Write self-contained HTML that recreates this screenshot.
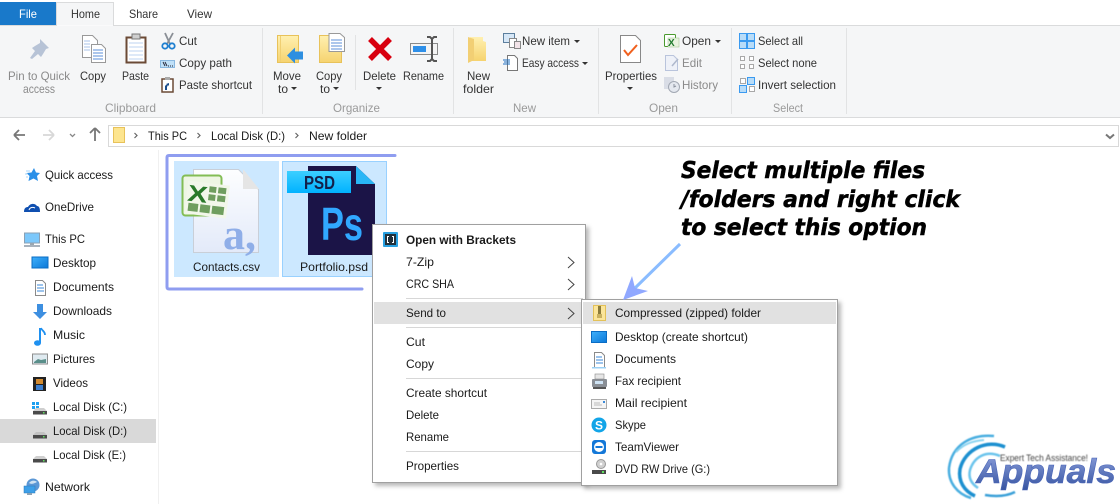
<!DOCTYPE html>
<html><head><meta charset="utf-8"><style>
html,body{margin:0;padding:0;background:#fff;overflow:hidden}
svg{display:block}
text{font-family:"Liberation Sans",sans-serif;font-size:12px;fill:#1a1a1a;white-space:pre}
.g{fill:#8a8a8a}.r{fill:#333}.l{fill:#9a9a9a}
.a{font-family:"DejaVu Sans",sans-serif;font-weight:bold;font-style:italic;font-size:23px;fill:#000;stroke:#000;stroke-width:.5}
</style></head><body>
<svg width="1120" height="504" viewBox="0 0 1120 504" xmlns="http://www.w3.org/2000/svg">
<defs>
<linearGradient id="fold" x1="0" y1="0" x2="0" y2="1"><stop offset="0" stop-color="#fff0b0"/><stop offset="1" stop-color="#f6d36f"/></linearGradient>
<linearGradient id="blue" x1="0" y1="0" x2="1" y2="1"><stop offset="0" stop-color="#3fb0fb"/><stop offset="1" stop-color="#0a78d8"/></linearGradient>
<linearGradient id="psd" x1="0" y1="0" x2="0" y2="1"><stop offset="0" stop-color="#3ccfff"/><stop offset="1" stop-color="#00b2ff"/></linearGradient>
<linearGradient id="page" x1="0" y1="0" x2="0" y2="1"><stop offset="0" stop-color="#fdfeff"/><stop offset="1" stop-color="#e3eaf9"/></linearGradient>
<linearGradient id="app" x1="0" y1="0" x2="0" y2="1"><stop offset="0" stop-color="#8c9fdc"/><stop offset="1" stop-color="#34529f"/></linearGradient>
<filter id="sh" x="-5%" y="-5%" width="112%" height="112%"><feDropShadow dx="3" dy="3" stdDeviation="2" flood-color="#000" flood-opacity=".28"/></filter>
<filter id="bl"><feGaussianBlur stdDeviation=".5"/></filter>
</defs>
<rect width="1120" height="504" fill="#fff"/>

<!-- tabs -->
<rect x="0" y="2" width="56" height="24" fill="#1979ca"/>
<path d="M56.500 25.500V2.500H113.500V25.500" fill="#f5f6f7" stroke="#dadbdc"/>
<rect x="0" y="26" width="1120" height="91" fill="#f5f6f7"/>
<rect x="0" y="25" width="57" height="1" fill="#dadbdc"/><rect x="113" y="25" width="1007" height="1" fill="#dadbdc"/>
<rect x="0" y="117" width="1120" height="1" fill="#dadbdc"/>
<text x="19" y="18" textLength="18" lengthAdjust="spacingAndGlyphs" style="fill:#fff">File</text>
<text x="71" y="18" textLength="29" lengthAdjust="spacingAndGlyphs" class="r">Home</text>
<text x="129" y="18" textLength="29" lengthAdjust="spacingAndGlyphs" class="r">Share</text>
<text x="187" y="18" textLength="25" lengthAdjust="spacingAndGlyphs" class="r">View</text>

<!-- ribbon seps -->
<g fill="#e2e3e4"><rect x="262" y="28" width="1" height="86"/><rect x="355" y="35" width="1" height="55"/><rect x="453" y="28" width="1" height="86"/><rect x="598" y="28" width="1" height="86"/><rect x="731" y="28" width="1" height="86"/><rect x="846" y="28" width="1" height="86"/></g>

<!-- ribbon labels -->
<text x="8" y="80" textLength="62" lengthAdjust="spacingAndGlyphs" class="g">Pin to Quick</text>
<text x="23" y="93" textLength="32" lengthAdjust="spacingAndGlyphs" class="g">access</text>
<text x="80" y="80" textLength="26" lengthAdjust="spacingAndGlyphs" class="r">Copy</text>
<text x="122" y="80" textLength="27" lengthAdjust="spacingAndGlyphs" class="r">Paste</text>
<text x="179" y="45" textLength="18" lengthAdjust="spacingAndGlyphs" class="r">Cut</text>
<text x="179" y="67" textLength="53" lengthAdjust="spacingAndGlyphs" class="r">Copy path</text>
<text x="179" y="89" textLength="73" lengthAdjust="spacingAndGlyphs" class="r">Paste shortcut</text>
<text x="105" y="112" textLength="51" lengthAdjust="spacingAndGlyphs" class="l">Clipboard</text>
<text x="273" y="80" textLength="28" lengthAdjust="spacingAndGlyphs" class="r">Move</text>
<text x="278" y="93" textLength="10" lengthAdjust="spacingAndGlyphs" class="r">to</text>
<text x="316" y="80" textLength="26" lengthAdjust="spacingAndGlyphs" class="r">Copy</text>
<text x="320" y="93" textLength="10" lengthAdjust="spacingAndGlyphs" class="r">to</text>
<text x="363" y="80" textLength="33" lengthAdjust="spacingAndGlyphs" class="r">Delete</text>
<text x="403" y="80" textLength="41" lengthAdjust="spacingAndGlyphs" class="r">Rename</text>
<text x="333" y="112" textLength="47" lengthAdjust="spacingAndGlyphs" class="l">Organize</text>
<text x="467" y="80" textLength="23" lengthAdjust="spacingAndGlyphs" class="r">New</text>
<text x="463" y="93" textLength="31" lengthAdjust="spacingAndGlyphs" class="r">folder</text>
<text x="522" y="45" textLength="48" lengthAdjust="spacingAndGlyphs" class="r">New item</text>
<text x="522" y="67" textLength="57" lengthAdjust="spacingAndGlyphs" class="r">Easy access</text>
<text x="513" y="112" textLength="23" lengthAdjust="spacingAndGlyphs" class="l">New</text>
<text x="605" y="80" textLength="52" lengthAdjust="spacingAndGlyphs" class="r">Properties</text>
<text x="682" y="45" textLength="29" lengthAdjust="spacingAndGlyphs" class="r">Open</text>
<text x="682" y="67" textLength="20" lengthAdjust="spacingAndGlyphs" class="g">Edit</text>
<text x="682" y="89" textLength="36" lengthAdjust="spacingAndGlyphs" class="g">History</text>
<text x="649" y="112" textLength="29" lengthAdjust="spacingAndGlyphs" class="l">Open</text>
<text x="758" y="45" textLength="45" lengthAdjust="spacingAndGlyphs" class="r">Select all</text>
<text x="758" y="67" textLength="59" lengthAdjust="spacingAndGlyphs" class="r">Select none</text>
<text x="758" y="89" textLength="78" lengthAdjust="spacingAndGlyphs" class="r">Invert selection</text>
<text x="773" y="112" textLength="30" lengthAdjust="spacingAndGlyphs" class="l">Select</text>
<!-- carets -->
<g fill="#333"><path d="M291 87h6l-3 3z"/><path d="M333 87h6l-3 3z"/><path d="M376 87h6l-3 3z"/><path d="M574 40h6l-3 3z"/><path d="M582 62h6l-3 3z"/><path d="M627 87h6l-3 3z"/><path d="M715 40h6l-3 3z"/></g>

<!-- Pin -->
<path d="M40 39l9 9-3 1-3 5-2 3-3-3-6 5-2-1 5-7-3-3 3-2 5-3z" fill="#b7c3d6"/>
<!-- Copy -->
<path d="M82.500 35.500h10l5 5v17h-15z" fill="#fff" stroke="#999"/>
<path d="M91.500 44.500h10l4 4v14h-14z" fill="#fff" stroke="#999"/>
<g stroke="#a8c3ea"><path d="M84 41h6M84 44h6M84 47h6M84 50h6"/></g>
<g stroke="#5b8fd8"><path d="M93 50h10M93 53h10M93 56h10M93 59h10"/></g>
<!-- Paste -->
<rect x="126.500" y="37.500" width="19" height="25" fill="#fff" stroke="#6b4a36" stroke-width="2"/>
<rect x="132" y="34" width="8" height="5" fill="#cfcfcf" stroke="#777"/>
<g stroke="#bcd3f0"><path d="M129 43h14M129 47h14M129 51h14M129 55h14M129 59h14"/></g>
<!-- Cut -->
<path d="M165 33l5 11M173 33l-6 11" stroke="#8a8f96" stroke-width="1.800" fill="none"/>
<circle cx="165" cy="46" r="2.700" fill="none" stroke="#1e7fd0" stroke-width="1.800"/><circle cx="172" cy="46" r="2.700" fill="none" stroke="#1e7fd0" stroke-width="1.800"/>
<!-- Copy path -->
<rect x="160.500" y="60.500" width="14" height="7" fill="#bfe0f8" stroke="#8ab8e0"/><path d="M163 62l2 4M165 62l2 4M168 66h1M170 66h1M172 66h1" stroke="#223" stroke-width=".9"/>
<!-- Paste shortcut -->
<rect x="162" y="79" width="11" height="13" fill="#fff" stroke="#6b4a36" stroke-width="1.500"/><rect x="165" y="77" width="5" height="3" fill="#aaa"/><path d="M165 90v-4l2-2h-1l3-1v3l-1-1-1 2v3z" fill="#1a4d8c"/>
<!-- Move to -->
<rect x="277.500" y="35.500" width="21" height="27" fill="url(#fold)" stroke="#e8c25a"/>
<rect x="280" y="36" width="1" height="26" fill="#f0cf72"/>
<path d="M287 55.500l8-8v4h8v8h-8v4z" fill="#2e8fe0"/>
<!-- Copy to -->
<rect x="319.500" y="35.500" width="22" height="27" fill="url(#fold)" stroke="#e8c25a"/>
<path d="M329 33.500h11l4.500 4v14H329z" fill="#fff" stroke="#999"/>
<g stroke="#5b8fd8"><path d="M331 40h11M331 43h11M331 46h11M331 49h11"/></g>
<!-- Delete -->
<path d="M370 39l20 20M390 39l-20 20" stroke="#d8000f" stroke-width="5.500"/>
<!-- Rename -->
<rect x="410.500" y="43.500" width="27" height="11" fill="#f4f4f4" stroke="#8a8a8a"/>
<rect x="413" y="46" width="13" height="6" fill="#2e8fe8"/>
<path d="M427 37h3l2 2 2-2h3M432 39v20M427 61h3l2-2 2 2h3" fill="none" stroke="#555" stroke-width="2"/>
<!-- New folder -->
<path d="M470 37h13v4l3 1v19h-18z" fill="url(#fold)"/><path d="M468 37v26l6-3V39z" fill="#f2cf74"/>
<!-- New item -->
<rect x="503.500" y="33.500" width="11" height="9" fill="#d6e7f7" stroke="#5c7f9e"/>
<rect x="509.500" y="38.500" width="7" height="9" fill="#fff" stroke="#888"/>
<rect x="514.500" y="41.500" width="6" height="7" fill="#f3e4e9" stroke="#888"/>
<!-- Easy access -->
<path d="M507.500 55.500h7l3 3v12h-10z" fill="#fff" stroke="#777"/><path d="M503 60h7M504 62h6M503 64h7" stroke="#1e6fc0"/>
<!-- Properties -->
<path d="M620.500 35.500h15l5 5v22h-20z" fill="#fff" stroke="#888"/>
<path d="M624 50l4 5 9-10" fill="none" stroke="#f0601e" stroke-width="2"/>
<!-- Open excel -->
<rect x="664.500" y="34.500" width="11" height="12" rx="1" fill="#fff" stroke="#4a9a2e"/>
<rect x="668" y="38" width="11" height="9" fill="#e8f3df" stroke="#9cbf88" stroke-width=".5"/>
<text x="668" y="46" style="font-size:10px;font-weight:bold;fill:#1f7a2e">X</text>
<!-- Edit -->
<path d="M665.500 55.500h8l4 4v11h-12z" fill="#eef1f8" stroke="#b9c4dc"/><path d="M672 66l6-7" stroke="#aeb8cc" stroke-width="1.500"/>
<!-- History -->
<rect x="664" y="77" width="10" height="12" fill="#d9dde6"/><circle cx="674" cy="87" r="5.500" fill="#e4e8ef" stroke="#a2a8b3"/><path d="M674 84v3l2-1" stroke="#8a919d" fill="none"/>
<!-- Select all -->
<g fill="#b8dcf8" stroke="#3a9af0"><rect x="739.500" y="33.500" width="7" height="7"/><rect x="747.500" y="33.500" width="7" height="7"/><rect x="739.500" y="41.500" width="7" height="7"/><rect x="747.500" y="41.500" width="7" height="7"/></g>
<g fill="#fff" stroke="#a8a8a8"><rect x="740.500" y="56.500" width="4" height="4"/><rect x="749.500" y="56.500" width="4" height="4"/><rect x="740.500" y="64.500" width="4" height="4"/><rect x="749.500" y="64.500" width="4" height="4"/>
<rect x="740.500" y="78.500" width="5" height="5"/><rect x="749.500" y="86.500" width="5" height="5"/></g>
<g fill="#b8dcf8" stroke="#3a9af0"><rect x="747.500" y="77.500" width="7" height="7"/><rect x="739.500" y="85.500" width="7" height="7"/></g>

<!-- address bar -->
<rect x="108.500" y="125.500" width="1010" height="21" fill="#fff" stroke="#d9d9d9"/>
<g fill="none" stroke="#777" stroke-width="1.800"><path d="M14 135l5-5M14 135l5 5M14 135h11"/></g>
<g fill="none" stroke="#d8d8d8" stroke-width="1.800"><path d="M54 135l-5-5M54 135l-5 5M54 135H43"/></g>
<path d="M70 134l2.500 2.500L75 134" fill="none" stroke="#888" stroke-width="1.300"/>
<g fill="none" stroke="#777" stroke-width="1.800"><path d="M95 128v13M95 128l-5 5M95 128l5 5"/></g>
<rect x="113.500" y="127.500" width="11" height="15" fill="#fde58f" stroke="#e8c25a"/>
<path d="M134.500 133l2.500 2.500-2.500 2.500M197.500 133l2.500 2.500-2.500 2.500M295.500 133l2.500 2.500-2.500 2.500" fill="none" stroke="#666" stroke-width="1.200"/>
<path d="M1106 134.500l4 3.500 4-3.500" fill="none" stroke="#777" stroke-width="2"/>
<text x="148" y="140" textLength="39" lengthAdjust="spacingAndGlyphs">This PC</text>
<text x="211" y="140" textLength="74" lengthAdjust="spacingAndGlyphs">Local Disk (D:)</text>
<text x="309" y="140" textLength="58" lengthAdjust="spacingAndGlyphs">New folder</text>

<!-- nav -->
<rect x="158" y="150" width="1" height="354" fill="#f0f0f0"/>
<rect x="0" y="419" width="156" height="24" fill="#d9d9d9"/>
<text x="45" y="179" textLength="68" lengthAdjust="spacingAndGlyphs">Quick access</text>
<text x="45" y="211" textLength="49" lengthAdjust="spacingAndGlyphs">OneDrive</text>
<text x="45" y="243" textLength="40" lengthAdjust="spacingAndGlyphs">This PC</text>
<text x="53" y="267" textLength="43" lengthAdjust="spacingAndGlyphs">Desktop</text>
<text x="53" y="291" textLength="61" lengthAdjust="spacingAndGlyphs">Documents</text>
<text x="53" y="315" textLength="59" lengthAdjust="spacingAndGlyphs">Downloads</text>
<text x="53" y="339" textLength="32" lengthAdjust="spacingAndGlyphs">Music</text>
<text x="53" y="363" textLength="42" lengthAdjust="spacingAndGlyphs">Pictures</text>
<text x="53" y="387" textLength="35" lengthAdjust="spacingAndGlyphs">Videos</text>
<text x="53" y="411" textLength="74" lengthAdjust="spacingAndGlyphs">Local Disk (C:)</text>
<text x="53" y="435" textLength="74" lengthAdjust="spacingAndGlyphs">Local Disk (D:)</text>
<text x="53" y="459" textLength="73" lengthAdjust="spacingAndGlyphs">Local Disk (E:)</text>
<text x="45" y="491" textLength="45" lengthAdjust="spacingAndGlyphs">Network</text>
<!-- nav icons -->
<path d="M34 168l2 4.500 4 .5-3 3 1 5-4.500-2.500-5 2.500 1-5-3-3 5-.5z" fill="#2b90e8"/><path d="M26 171h4M25 174h3M26 177h2" stroke="#a8d4f8"/>
<path d="M24 212c0-4 2-5 4-5 2-4 7-4 9-1 2 0 3 2 3 6z" fill="#0f4fb0"/><path d="M29 210c1-3 4-3 6-2" stroke="#fff" fill="none"/>
<rect x="24.500" y="233" width="15" height="10" fill="#7cc8fb" stroke="#8aa0b4"/><rect x="30" y="243" width="4" height="2" fill="#9aa6b0"/><rect x="24" y="245" width="16" height="2" fill="#a8b2bc"/>
<rect x="32" y="257" width="16" height="11" fill="url(#blue)" stroke="#0a6cc4"/>
<path d="M35.500 280.500h7l3 3v12h-10z" fill="#fff" stroke="#8a8a8a"/><path d="M37 285h6M37 288h7M37 291h7" stroke="#3b8ad8"/>
<path d="M37 304h6v8h4l-7 7-7-7h4z" fill="#3d8fe0"/>
<path d="M40 328v15" stroke="#1e90f0" stroke-width="2"/><ellipse cx="37.500" cy="343" rx="3.500" ry="2.800" fill="#1e90f0"/><path d="M41 328c1 3 4 3 4 7" stroke="#1e90f0" stroke-width="1.800" fill="none"/>
<rect x="32.500" y="354" width="15" height="10" fill="#dfeaf0" stroke="#8e8e8e"/><path d="M34 362l4-3 3 1 5-1v4H34z" fill="#5a8f8a"/>
<rect x="33" y="377" width="13" height="14" fill="#222"/><rect x="36" y="379" width="7" height="5" fill="#d28a30"/><rect x="36" y="385" width="7" height="5" fill="#3c7fd0"/>
<g fill="#1ea0f0"><rect x="32" y="402" width="3" height="3"/><rect x="36" y="402" width="3" height="3"/><rect x="32" y="406" width="3" height="3"/><rect x="36" y="406" width="3" height="3"/></g>
<path d="M36 408h8l3 3H33z" fill="#cfcfcf"/><rect x="33" y="411" width="14" height="3.500" fill="#4a4a4a"/><rect x="43" y="412" width="1.500" height="1.500" fill="#5fe05f"/>
<path d="M36 432h8l3 3H33z" fill="#c2c2c2"/><rect x="33" y="435" width="14" height="3.500" fill="#4a4a4a"/><rect x="43" y="436" width="1.500" height="1.500" fill="#5fe05f"/>
<path d="M36 456h8l3 3H33z" fill="#cfcfcf"/><rect x="33" y="459" width="14" height="3.500" fill="#4a4a4a"/><rect x="43" y="460" width="1.500" height="1.500" fill="#5fe05f"/>
<circle cx="33" cy="485" r="6.500" fill="#5b97d5"/><path d="M29 483c2-3 6-3 8-1-2 1-5 3-8 1z" fill="#cfe2f2"/><rect x="24" y="486" width="11" height="7" fill="#3d9fe8" stroke="#2b78b8" stroke-width=".5"/><rect x="27" y="493" width="5" height="2" fill="#8ea2b4"/>

<!-- file selections -->
<path d="M395 155.500H169q-2 0-2 2V287q0 2 2 2H362" fill="none" stroke="#8f9df0" stroke-width="3" stroke-linecap="round"/>
<rect x="174" y="161" width="105" height="116" fill="#cce8ff"/>
<rect x="282.500" y="161.500" width="104" height="115" fill="#cce8ff" stroke="#99d1ff"/>
<!-- csv icon -->
<path d="M193.500 169.500h45l20 20v63h-65z" fill="url(#page)" stroke="#c9cfd8"/>
<path d="M243 169l16 20h-16z" fill="#e5e5e5"/>
<rect x="182.500" y="175.500" width="39" height="40" rx="3" fill="#eef6e4" stroke="#83bd55" stroke-width="2"/>
<g transform="rotate(7 207 200)"><rect x="186" y="183" width="42" height="33" fill="#f2f7ea"/>
<g fill="#6f9e5f"><rect x="208" y="186" width="7" height="6"/><rect x="217" y="186" width="8" height="6"/><rect x="208" y="194" width="7" height="6"/><rect x="217" y="194" width="8" height="6"/><rect x="189" y="205" width="10" height="8"/><rect x="201" y="205" width="10" height="8"/><rect x="213" y="205" width="12" height="8"/></g>
<text x="187" y="203" textLength="20" lengthAdjust="spacingAndGlyphs" style="font-weight:bold;font-size:23px;fill:#2a7a2a">X</text></g>
<text x="223" y="249" style="font-family:'Liberation Serif',serif;font-weight:bold;font-size:44px;fill:#8faee8" textLength="33" lengthAdjust="spacingAndGlyphs">a,</text>
<text x="193" y="271" textLength="67" lengthAdjust="spacingAndGlyphs">Contacts.csv</text>
<text x="300" y="271" textLength="68" lengthAdjust="spacingAndGlyphs">Portfolio.psd</text>
<!-- psd icon -->
<path d="M308 166h48l19 18v71h-67z" fill="#1b1447"/>
<path d="M356 166l19 18h-19z" fill="#29b6f6"/>
<rect x="287" y="171" width="64" height="22" fill="url(#psd)"/>
<text x="304" y="189" textLength="31" lengthAdjust="spacingAndGlyphs" style="font-weight:bold;font-size:18px;fill:#13204a">PSD</text>
<text x="321" y="240" textLength="42" lengthAdjust="spacingAndGlyphs" style="font-size:46px;font-weight:bold;fill:#31a8ff">Ps</text>

<!-- context menu -->
<rect x="372.500" y="224.500" width="213" height="258" fill="#fff" stroke="#a0a0a0" filter="url(#sh)"/>
<rect x="374" y="302" width="209" height="22" fill="#e1e1e1"/>
<g fill="#d7d7d7"><rect x="406" y="298" width="177" height="1"/><rect x="406" y="327" width="177" height="1"/><rect x="406" y="378" width="177" height="1"/><rect x="406" y="451" width="177" height="1"/></g>
<rect x="383" y="232" width="15" height="15" rx="1" fill="#29a0e0"/><rect x="385" y="234" width="11" height="11" fill="#22303a"/><path d="M389 236.500h-1.500v6h1.500M392 236.500h1.500v6H392" stroke="#fff" fill="none"/>
<text x="406" y="244" textLength="110" lengthAdjust="spacingAndGlyphs" style="font-weight:bold">Open with Brackets</text>
<text x="406" y="266" textLength="28" lengthAdjust="spacingAndGlyphs">7-Zip</text>
<text x="406" y="288" textLength="48" lengthAdjust="spacingAndGlyphs">CRC SHA</text>
<text x="406" y="317" textLength="40" lengthAdjust="spacingAndGlyphs">Send to</text>
<text x="406" y="346" textLength="19" lengthAdjust="spacingAndGlyphs">Cut</text>
<text x="406" y="368" textLength="28" lengthAdjust="spacingAndGlyphs">Copy</text>
<text x="406" y="397" textLength="81" lengthAdjust="spacingAndGlyphs">Create shortcut</text>
<text x="406" y="419" textLength="33" lengthAdjust="spacingAndGlyphs">Delete</text>
<text x="406" y="441" textLength="43" lengthAdjust="spacingAndGlyphs">Rename</text>
<text x="406" y="470" textLength="53" lengthAdjust="spacingAndGlyphs">Properties</text>
<path d="M568 257l6 5.500-6 5.500M568 279l6 5.500-6 5.500M568 308l6 5.500-6 5.500" fill="none" stroke="#444"/>

<!-- submenu -->
<rect x="581.500" y="299.500" width="256" height="186" fill="#fff" stroke="#a0a0a0" filter="url(#sh)"/>
<rect x="583" y="302" width="253" height="22" fill="#e1e1e1"/>
<text x="615" y="317" textLength="146" lengthAdjust="spacingAndGlyphs">Compressed (zipped) folder</text>
<text x="615" y="341" textLength="133" lengthAdjust="spacingAndGlyphs">Desktop (create shortcut)</text>
<text x="615" y="363" textLength="61" lengthAdjust="spacingAndGlyphs">Documents</text>
<text x="615" y="385" textLength="66" lengthAdjust="spacingAndGlyphs">Fax recipient</text>
<text x="615" y="407" textLength="72" lengthAdjust="spacingAndGlyphs">Mail recipient</text>
<text x="615" y="429" textLength="31" lengthAdjust="spacingAndGlyphs">Skype</text>
<text x="615" y="451" textLength="64" lengthAdjust="spacingAndGlyphs">TeamViewer</text>
<text x="615" y="473" textLength="95" lengthAdjust="spacingAndGlyphs">DVD RW Drive (G:)</text>
<rect x="593.500" y="305.500" width="12" height="15" fill="#fbe59a" stroke="#e3c158"/><rect x="598" y="306" width="3" height="10" fill="#8a7a3a"/><rect x="597" y="314" width="5" height="4" fill="#c8b060"/>
<rect x="591.500" y="331.500" width="15" height="11" fill="url(#blue)" stroke="#0a6cc4"/>
<path d="M594.500 352.500h7l3 3v12h-10z" fill="#fff" stroke="#8a8a8a"/><path d="M596 357h6M596 360h7M596 363h7" stroke="#3b8ad8"/><rect x="592" y="367" width="14" height="1.500" fill="#9bd0f5"/>
<rect x="592" y="379" width="15" height="8" rx="1" fill="#8a8f96"/><rect x="595" y="374" width="9" height="5" fill="#e6e6e6" stroke="#888" stroke-width=".6"/><rect x="595" y="381" width="8" height="3" fill="#cfe4f5"/><rect x="593" y="387" width="13" height="2" fill="#555"/>
<rect x="591.500" y="399.500" width="15" height="9" fill="#f5f5f5" stroke="#aaa"/><path d="M594 403h6M594 405h8" stroke="#bbb"/><rect x="603" y="401" width="2" height="2" fill="#3b8ad8"/>
<circle cx="599" cy="425" r="7.500" fill="#12a5e8"/><text x="595" y="429.500" style="font-weight:bold;font-size:12px;fill:#fff">S</text>
<rect x="592" y="440" width="14" height="14" rx="3" fill="#1478d8"/><circle cx="599" cy="447" r="5" fill="#fff"/><path d="M595.500 447h7" stroke="#1478d8" stroke-width="2"/>
<circle cx="601" cy="464" r="4.500" fill="#d0d0d0" stroke="#999"/><circle cx="601" cy="464" r="1.300" fill="#fff"/><rect x="592" y="470" width="14" height="4" fill="#4a4a4a"/><rect x="602" y="471" width="2" height="2" fill="#5fe05f"/>

<!-- annotation -->
<text x="681" y="178" class="a" textLength="244" lengthAdjust="spacingAndGlyphs">Select multiple files</text>
<text x="681" y="207" class="a" textLength="279" lengthAdjust="spacingAndGlyphs">/folders and right click</text>
<text x="681" y="235" class="a" textLength="246" lengthAdjust="spacingAndGlyphs">to select this option</text>
<path d="M680 244 634 289" stroke="#8abcff" stroke-width="3"/>
<path d="M623 300l9-24 3 12 13 3z" fill="#90a8ff"/>

<!-- logo -->
<g fill="none" filter="url(#bl)">
<path d="M994 436c-22-2-42 8-45 32-1 14 8 26 22 30" stroke="#4aaee0" stroke-width="2.500"/>
<path d="M1005 447c-18-8-40 2-45 22-2 12 4 22 15 27" stroke="#1e90d0" stroke-width="3.500"/>
<path d="M1000 456c-14-6-26 1-30 14-2 8 2 14 8 18" stroke="#6cc4ec" stroke-width="2.500"/>
<path d="M956 452c8-8 16-11 28-12" stroke="#8ad4f0" stroke-width="2"/>
<path d="M985 495c12 2 22 1 30-3" stroke="#3aa0d8" stroke-width="2.500"/>
</g>
<text x="1000" y="461" textLength="88" lengthAdjust="spacingAndGlyphs" style="font-size:9px;fill:#444" filter="url(#bl)">Expert Tech Assistance!</text>
<text x="976" y="483" textLength="140" lengthAdjust="spacingAndGlyphs" style="font-weight:bold;font-style:italic;font-size:34px;fill:url(#app)" stroke="#4a66b8" stroke-width=".6">Appuals</text>
</svg>
</body></html>
